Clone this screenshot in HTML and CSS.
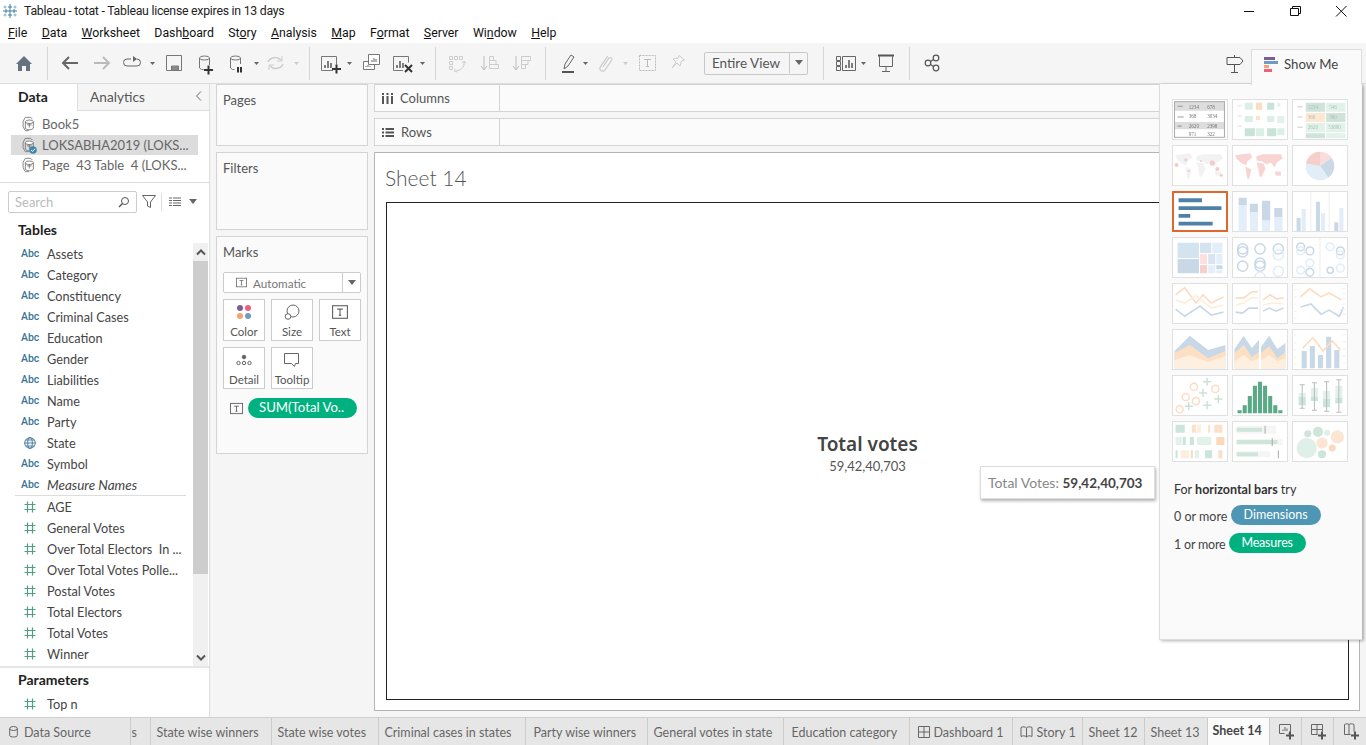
FILE: index.html
```html
<!DOCTYPE html>
<html lang="en">
<head>
    <meta charset="UTF-8">
    <meta name="viewport" content="width=device-width, initial-scale=1.0">
    <title>Tableau - totat</title>
    <link rel="stylesheet" href="styles.css">
</head>
<body>
    <svg class="defs" width="0" height="0">
        <symbol id="num" viewBox="0 0 12 12"><path d="M3.5 .5v11M8.5 .5v11M.5 3.5h11M.5 8.5h11" fill="none" stroke="#4f9f80" stroke-width="1.2"/></symbol>
        <symbol id="ds" viewBox="0 0 18 18"><path d="M6 1.500h6l2 2M3.500 6L6 1.500M3.500 6v6l2.500 4.500h4" fill="none" stroke="#777"/><ellipse cx="10.500" cy="6.500" rx="4.500" ry="2" fill="#fff" stroke="#777"/><path d="M6 6.500v7c0 1 2 2 4.500 2s4.500-1 4.500-2v-7M8 10h5M10.500 8v5" fill="none" stroke="#777"/></symbol>
        <symbol id="t" viewBox="0 0 14 14"><rect x=".5" y="1.500" width="13" height="11" fill="none" stroke="#666"/><path d="M4.500 4.500h5M7 4.500v5.500M6 10h2" fill="none" stroke="#666"/></symbol>
        <symbol id="world" viewBox="0 0 53 38"><path d="M2 9l15-2 2 4-5 4-1 4-4-2-5-4zM12 20l6 3-2 9h-2zM23 10l6-2h18l2 4-6 4-2 5-4-5-4 2-4-3-6-1zM23 16l7 1 2 5-4 8h-2l-1-7zM41 25h6v4h-5z"/></symbol>
    </svg>

    <div class="titlebar">
        <svg class="appicon" width="14" height="14" viewBox="0 0 14 14"><path d="M7 0v14M0 7h14M5 3h4M5 11h4M3 5v4M11 5v4" stroke="#3f7fa0" fill="none"/><path d="M2 1.500v3M.5 3h3M12 1.500v3M10.500 3h3M2 9.500v3M.5 11h3M12 9.500v3M10.500 11h3" stroke="#7fb0c8" fill="none"/></svg>
        <span>Tableau - totat - Tableau license expires in 13 days</span>
        <div class="winbtns">
            <svg width="46" height="20"><path d="M18 10.500h10" stroke="#111"/></svg>
            <svg width="46" height="20"><path d="M20.500 7.500v-2h8v7h-2M18.500 7.500h8v7h-8z" stroke="#111" fill="none"/></svg>
            <svg width="46" height="20"><path d="M18 5l10.500 10.500M28.500 5L18 15.500" stroke="#111" fill="none"/></svg>
        </div>
    </div>

    <nav class="menubar">
        <span><u>F</u>ile</span><span><u>D</u>ata</span><span><u>W</u>orksheet</span><span>Dash<u>b</u>oard</span><span>St<u>o</u>ry</span><span><u>A</u>nalysis</span><span><u>M</u>ap</span><span>F<u>o</u>rmat</span><span><u>S</u>erver</span><span>Wi<u>n</u>dow</span><span><u>H</u>elp</span>
    </nav>

    <div class="toolbar">
        <svg width="39" height="24" viewBox="8 52 39 24"><path d="M16 65l8-8 8 8h-2v7h-4v-5h-4v5h-4v-7z" fill="#66727f"/></svg>
        <i class="sep"></i>
        <svg width="261" height="24" viewBox="48 52 261 24" fill="none">
            <path d="M78 64H63M69 58l-6 6 6 6" stroke="#666" stroke-width="2"/>
            <path d="M94 64h15M103 58l6 6-6 6" stroke="#bbb" stroke-width="2"/>
            <path d="M131 60h-4a3.500 3.500 0 0 0 0 7h10a3.500 3.500 0 0 0 0-7" stroke="#666"/><path d="M133 57l4 3-4 3z" fill="#666"/>
            <path d="M150 63h5l-2.500 3z" fill="#666"/>
            <path d="M166.500 56.500h15v15h-15zM171.500 71v-4h7v4" stroke="#777"/><path d="M172 67h6v4h-6z" fill="#888"/>
            <ellipse cx="204.500" cy="59" rx="5" ry="2" stroke="#777"/><path d="M199.500 59v10l2 1.500h2M209.500 59v7" stroke="#777"/><path d="M204 71h9M208.500 66.500v9" stroke="#333" stroke-width="2"/>
            <ellipse cx="235.500" cy="59" rx="5" ry="2" stroke="#777"/><path d="M230.500 59v10l2 1.500h2M240.500 59v6" stroke="#777"/><path d="M238 68v5.500M241 68v5.500" stroke="#333" stroke-width="2"/>
            <path d="M254 63h5l-2.500 3z" fill="#666"/>
            <path d="M268 63a7.500 6.500 0 0 1 13-2M283 65a7.500 6.500 0 0 1-13 2" stroke="#ccc" stroke-width="1.500"/><path d="M282 57v5h-5M269 71v-5h5" stroke="#ccc"/>
            <path d="M294 63h5l-2.500 3z" fill="#ccc"/>
        </svg>
        <i class="sep"></i>
        <svg width="125" height="24" viewBox="310 52 125 24" fill="none">
            <path d="M333 71.500h-11.500v-14h15v8" stroke="#777"/><path d="M325 69v-3M328 69v-7M331 69v-5" stroke="#555" stroke-width="1.500"/><path d="M332 70h9M336.500 65.500v9" stroke="#333" stroke-width="2"/>
            <path d="M347 63h5l-2.500 3z" fill="#666"/>
            <path d="M363.500 62.500h11v8h-11z" fill="#fff" stroke="#777"/><path d="M368.500 55.500h11v10h-11z" fill="#fff" stroke="#777"/><path d="M372 63v-2M374 63v-4M376 63v-3M366 68v-1M368 68v-2M370 68v-1" stroke="#666"/>
            <path d="M403 71.500h-9.500v-14h15v6" stroke="#777"/><path d="M397 69v-3M400 69v-7M403 69v-5" stroke="#555" stroke-width="1.500"/><path d="M405 66l7 7M412 66l-7 7" stroke="#333" stroke-width="2"/>
            <path d="M420 63h5l-2.500 3z" fill="#666"/>
        </svg>
        <i class="sep"></i>
        <svg width="109" height="24" viewBox="436 52 109 24" fill="none" stroke="#ccc">
            <path d="M449.500 57.500h3v3h-3zM454.500 57.500h3v3h-3zM459.500 57.500h3v3h-3zM449.500 62.500h3v3h-3zM449.500 67.500h3v3h-3zM464 62c1 5-2 9-8 10M456 70l-2 2 3 1M462 64l2-2 2 2"/>
            <path d="M484 57v13M481 67l3 4 3-4" stroke="#bbb"/><path d="M489.500 57.500h4v4h-4zM489.500 61.500h6.500v4h-6.500zM489.500 65.500h9v4h-9z"/>
            <path d="M516 57v13M513 67l3 4 3-4" stroke="#bbb"/><path d="M521.500 57.500h9v4h-9zM521.500 61.500h6.500v4h-6.500zM521.500 65.500h4v4h-4z"/>
        </svg>
        <i class="sep"></i>
        <svg width="158" height="24" viewBox="546 52 158 24" fill="none">
            <path d="M564 70l1-5 6-9 3 2-6 9z" stroke="#666"/><path d="M562 73h12" stroke="#555" stroke-width="2"/>
            <path d="M583 63h5l-2.500 3z" fill="#666"/>
            <path d="M603 68l6-9a1.800 1.800 0 0 1 2.800 2l-7.300 10.500a2.800 2.800 0 0 1-4.300-3.400l7.500-11" stroke="#ccc" stroke-width="1.200"/>
            <path d="M623 63h5l-2.500 3z" fill="#ccc"/>
            <path d="M639.500 56.500h16v15h-16z" stroke="#bbb" stroke-dasharray="2 1"/><path d="M644 60.500h7M647.500 60.500v7M646 67.500h3" stroke="#bbb"/>
            <path d="M679 56.500l5.500 4.500-3 1-1.500 5-3-3-5 5 4-6-3-3 5-1z" stroke="#ccc"/>
        </svg>
        <div class="fit">
            <span>Entire View</span>
            <b><i class="caret"></i></b>
        </div>
        <i class="sep sep-fit"></i>
        <svg width="85" height="24" viewBox="824 52 85 24" fill="none">
            <path d="M836.500 57.500h4v4h-4zM836.500 62.500h4v4h-4zM836.500 67.500h4v4h-4zM842.500 57.500h13v14h-13z" stroke="#666"/><path d="M846 69v-3M849 69v-8M852 69v-5" stroke="#555" stroke-width="1.500"/>
            <path d="M861 63h5l-2.500 3z" fill="#666"/>
            <path d="M878 56.500h16" stroke="#555" stroke-width="2"/><path d="M879.500 57v10.500h13V57M886 67.500v4.500M882 72.500h8" stroke="#666"/>
        </svg>
        <i class="sep"></i>
        <svg class="share" width="30" height="24" viewBox="910 52 30 24" fill="none" stroke="#555" stroke-width="1.200"><circle cx="928" cy="64" r="2.800"/><circle cx="936" cy="59" r="2.800"/><circle cx="936" cy="69" r="2.800"/><path d="M930.500 62.500l3-2M930.500 65.500l3 2"/></svg>
        <svg class="sign" width="18" height="19" viewBox="0 0 18 19" fill="none" stroke="#555"><path d="M1 3.500h13l3 3.500-3 3.500H1zM8.500 1v2.500M8.500 10.500V18M5 18.500h7"/></svg>
    </div>

    <main class="main">
        <aside class="datapane">
            <div class="panetabs">
                <div class="tab-data">Data</div>
                <div class="tab-analytics">Analytics<svg width="8" height="12" fill="none" stroke="#666"><path d="M6 1.500L1.500 6 6 10.500"/></svg></div>
            </div>
            <ul class="sources">
                <li><svg width="16" height="16"><use href="#ds"/></svg>Book5</li>
                <li class="on"><svg width="16" height="16"><use href="#ds"/></svg><svg class="check" width="8" height="8"><circle cx="4" cy="4" r="3.800" fill="#3f87ad"/><path d="M2 4l1.500 1.500L6 2.800" fill="none" stroke="#fff"/></svg>LOKSABHA2019 (LOKS...</li>
                <li><svg width="16" height="16"><use href="#ds"/></svg>Page &nbsp;43 Table &nbsp;4 (LOKS...</li>
            </ul>
            <div class="searchrow">
                <div class="search">Search<svg width="12" height="12" fill="none" stroke="#555"><circle cx="7" cy="5" r="3.500"/><path d="M4.500 7.500L1 11" stroke-width="1.400"/></svg></div>
                <svg class="funnel" width="14" height="15" fill="none" stroke="#666"><path d="M.5 1.500h13L8.500 8v5.500l-3-1.500V8z"/></svg>
                <i class="vline"></i>
                <svg class="listicon" width="12" height="10" stroke="#666"><path d="M0 1h3M4 1h8M0 3.500h3M4 3.500h8M0 6h3M4 6h8M0 8.500h3M4 8.500h8"/></svg>
                <i class="caret"></i>
            </div>
            <h3 class="head">Tables</h3>
            <div class="fields">
                <ul class="fieldlist">
                    <li><span class="abc">Abc</span>Assets</li>
                    <li><span class="abc">Abc</span>Category</li>
                    <li><span class="abc">Abc</span>Constituency</li>
                    <li><span class="abc">Abc</span>Criminal Cases</li>
                    <li><span class="abc">Abc</span>Education</li>
                    <li><span class="abc">Abc</span>Gender</li>
                    <li><span class="abc">Abc</span>Liabilities</li>
                    <li><span class="abc">Abc</span>Name</li>
                    <li><span class="abc">Abc</span>Party</li>
                    <li><span class="abc"><svg width="12" height="12" fill="none" stroke="#4e7f9e"><circle cx="6" cy="6" r="5.300"/><ellipse cx="6" cy="6" rx="2.300" ry="5.300"/><path d="M.5 6h11M1.500 3h9M1.500 9h9"/></svg></span>State</li>
                    <li><span class="abc">Abc</span>Symbol</li>
                    <li class="last"><span class="abc">Abc</span><em>Measure Names</em></li>
                    <li><span class="abc"><svg width="12" height="12"><use href="#num"/></svg></span>AGE</li>
                    <li><span class="abc"><svg width="12" height="12"><use href="#num"/></svg></span>General Votes</li>
                    <li><span class="abc"><svg width="12" height="12"><use href="#num"/></svg></span>Over Total Electors &nbsp;In ...</li>
                    <li><span class="abc"><svg width="12" height="12"><use href="#num"/></svg></span>Over Total Votes Polle...</li>
                    <li><span class="abc"><svg width="12" height="12"><use href="#num"/></svg></span>Postal Votes</li>
                    <li><span class="abc"><svg width="12" height="12"><use href="#num"/></svg></span>Total Electors</li>
                    <li><span class="abc"><svg width="12" height="12"><use href="#num"/></svg></span>Total Votes</li>
                    <li><span class="abc"><svg width="12" height="12"><use href="#num"/></svg></span>Winner</li>
                </ul>
                <div class="scrollbar">
                    <b><svg width="10" height="7" fill="none" stroke="#555" stroke-width="2"><path d="M1 5.500l4-4 4 4"/></svg></b>
                    <div class="thumbbar"></div>
                    <div class="track"></div>
                    <b><svg width="10" height="7" fill="none" stroke="#555" stroke-width="2"><path d="M1 1.500l4 4 4-4"/></svg></b>
                </div>
            </div>
            <h3 class="head head-params">Parameters</h3>
            <ul class="fieldlist">
                <li><span class="abc"><svg width="12" height="12"><use href="#num"/></svg></span>Top n</li>
            </ul>
        </aside>

        <section class="cards">
            <div class="card card-pages">Pages</div>
            <div class="card card-filters">Filters</div>
            <div class="card card-marks">
                Marks
                <div class="marktype">
                    <svg width="11" height="11"><use href="#t"/></svg>
                    <span>Automatic</span>
                    <b><i class="caret"></i></b>
                </div>
                <div class="markgrid">
                    <div class="mark">
                        <svg width="16" height="16"><circle cx="4" cy="4" r="3" fill="#7b5f93"/><circle cx="12" cy="4" r="3" fill="#ef5f78"/><circle cx="4" cy="12" r="3" fill="#f2a36e"/><circle cx="12" cy="12" r="3" fill="#6f9bc9"/></svg>
                        Color
                    </div>
                    <div class="mark">
                        <svg width="16" height="16" fill="none" stroke="#666"><circle cx="9" cy="7" r="6"/><circle cx="4" cy="12.500" r="2.800" fill="#fff"/></svg>
                        Size
                    </div>
                    <div class="mark">
                        <svg width="16" height="16"><use href="#t"/></svg>
                        Text
                    </div>
                    <div class="mark">
                        <svg width="16" height="16" fill="none" stroke="#666"><circle cx="8" cy="5" r="1.800" fill="#666"/><circle cx="2.500" cy="11" r="1.700"/><circle cx="8" cy="11" r="1.700"/><circle cx="13.500" cy="11" r="1.700"/></svg>
                        Detail
                    </div>
                    <div class="mark">
                        <svg width="16" height="16" fill="none" stroke="#666"><path d="M.5 1.500h14v10h-3l-1 3-3-3h-7z"/></svg>
                        Tooltip
                    </div>
                </div>
                <div class="markpill">
                    <svg width="13" height="13"><use href="#t"/></svg>
                    <span class="pill">SUM(Total Vo..</span>
                </div>
            </div>
        </section>

        <section class="work">
            <div class="shelf">
                <div class="shelfname"><svg width="11" height="11" fill="#555"><path d="M0 3h2v8H0zM4.500 3h2v8h-2zM9 3h2v8H9zM0 0h2v2H0zM4.500 0h2v2h-2zM9 0h2v2H9z"/></svg>Columns</div>
            </div>
            <div class="shelf">
                <div class="shelfname"><svg width="12" height="11" fill="#555"><path d="M0 1h2v2H0zM3.500 1H12v2H3.500zM0 4.500h2v2H0zM3.500 4.500H12v2H3.500zM0 8h2v2H0zM3.500 8H12v2H3.500z"/></svg>Rows</div>
            </div>
            <div class="sheet">
                <h2>Sheet 14</h2>
                <div class="view">
                    <div class="big">Total votes</div>
                    <div class="small">59,42,40,703</div>
                </div>
            </div>
        </section>
    </main>

    <footer class="tabs">
        <div class="sheettab tab-source"><svg width="9" height="12" fill="none" stroke="#666"><ellipse cx="4.500" cy="2.500" rx="3.800" ry="2"/><path d="M.7 2.500v7c0 2 7.600 2 7.600 0v-7"/></svg>Data Source</div>
        <div class="sheettab tab-cut">s</div>
        <div class="sheettab w121">State wise winners</div>
        <div class="sheettab w107">State wise votes</div>
        <div class="sheettab w147">Criminal cases in states</div>
        <div class="sheettab w122 pl8">Party wise winners</div>
        <div class="sheettab w136">General votes in state</div>
        <div class="sheettab w126 pl8">Education category</div>
        <div class="sheettab w103 pl8"><svg width="12" height="12" fill="none" stroke="#666"><path d="M.5.500h11v11H.5zM.5 6h11M6 .500v11"/></svg>Dashboard 1</div>
        <div class="sheettab w70 pl7"><svg width="13" height="12" fill="none" stroke="#666"><path d="M1 1.500c2-1 4-1 5.500.5 1.500-1.500 3.500-1.500 5.500-.5v9c-2-1-4-1-5.500.5-1.500-1.500-3.500-1.500-5.500-.5zM6.500 2v9"/></svg>Story 1</div>
        <div class="sheettab w62">Sheet 12</div>
        <div class="sheettab w63">Sheet 13</div>
        <div class="sheettab w62 active">Sheet 14</div>
        <div class="sheettab w32 addtab"><svg width="18" height="18" fill="none" stroke="#666"><path d="M1.500 1.500h11v9h-2M1.500 1.500v9h5M5 8V6.500M7 8V4M9 8V5.500"/><path d="M8 12.500h8M12 8.500v8" stroke="#555" stroke-width="2"/></svg></div>
        <div class="sheettab w32 addtab"><svg width="18" height="18" fill="none" stroke="#666"><path d="M1.500 1.500h11v7M1.500 1.500v10h6M7 1.500v10M1.500 6.500h11"/><path d="M8 12.500h8M12 8.500v8" stroke="#555" stroke-width="2"/></svg></div>
        <div class="sheettab w33 addtab"><svg width="18" height="18" fill="none" stroke="#666"><path d="M1.500 1.500c2-1 3-1 4.500 0 1.500-1 3-1 5 0v7M1.500 1.500v10h6M6 1.500v10"/><path d="M8 12.500h8M12 8.500v8" stroke="#555" stroke-width="2"/></svg></div>
    </footer>

    <div class="tooltip">Total Votes: <b>59,42,40,703</b></div>

    <aside class="showme">
        <div class="showme-tab">
            <svg width="15" height="15"><path d="M0 0h11v3H0z" fill="#7b5f93"/><path d="M0 4h14v3H0z" fill="#6f9bc9"/><path d="M0 8h5v3H0z" fill="#f2a36e"/><path d="M0 12h8v3H0z" fill="#ef5f78"/></svg>
            Show Me
        </div>
        <div class="thumbs">
            <!-- text table -->
            <div class="thumb"><svg viewBox="1.500 1.500 53 38">
                <path d="M3 3h49v9H3zM3 23h49v7H3z" fill="#ddd"/><rect x="3" y="3" width="49" height="35" fill="none" stroke="#aaa"/>
                <path d="M6 7.500h5M6 18h6M6 27h4" stroke="#999"/>
                <g font-size="5" fill="#777" font-family="'Liberation Serif', serif"><text x="17" y="10">1234</text><text x="35" y="10">678</text><text x="17" y="19.500">368</text><text x="35" y="19.500">3034</text><text x="17" y="28.500">2620</text><text x="35" y="28.500">2398</text><text x="17" y="36.500">971</text><text x="35" y="36.500">322</text></g>
            </svg></div>
            <!-- highlight squares -->
            <div class="thumb"><svg viewBox="1.500 1.500 53 38">
                <path d="M6 7h4M6 17h4M6 27h4" stroke="#eee" stroke-width="2"/>
                <path d="M13 4h8v7h-8zM13 17h8v6h-8zM24 29h8v8h-8zM35 17h7v6h-7zM45 29h7v7h-7z" fill="#dcefe6"/>
                <path d="M24 4h6v7h-6z" fill="#fbdcc0"/><path d="M24 17h4v4h-4z" fill="#fce3c8"/>
                <path d="M35 4h7v7h-7zM13 29h10v8H13zM35 29h9v8h-9z" fill="#c9e3d8"/><path d="M45 4h3v4h-3zM45 17h7v7h-7z" fill="#e3f1eb"/>
            </svg></div>
            <!-- heat table -->
            <div class="thumb"><svg viewBox="1.500 1.500 53 38">
                <path d="M6 8h5M6 18h5M6 28h5" stroke="#ddd" stroke-width="1.500"/>
                <path d="M14 4h19v9H14zM34 14h19v9H34zM14 34h19v5H14z" fill="#cfe3da"/><path d="M34 4h19v9H34zM14 24h19v9H14zM34 24h19v9H34zM34 34h19v5H34z" fill="#e3f1eb"/><path d="M14 14h19v9H14z" fill="#fde8d4"/>
                <g font-size="5" fill="#a9c4b8" font-family="'Liberation Serif', serif"><text x="16" y="10">1234</text><text x="37" y="10">546</text><text x="16" y="20">368</text><text x="37" y="20">380</text><text x="16" y="30">2620</text><text x="36" y="30">53890</text></g>
            </svg></div>
            <!-- symbol map -->
            <div class="thumb"><svg viewBox="1.500 1.500 53 38">
                <use href="#world" width="53" height="38" x="1.500" y="1.500" fill="#f2f2f2"/>
                <g fill="#f3cbc8"><circle cx="5" cy="20" r="2"/><circle cx="14" cy="15" r="1.500"/><circle cx="29" cy="16" r="1"/><circle cx="40" cy="18" r="2.500"/><circle cx="45" cy="24" r="2"/><circle cx="49" cy="30" r="1.500"/><circle cx="17" cy="26" r="1"/></g>
            </svg></div>
            <!-- filled map -->
            <div class="thumb"><svg viewBox="1.500 1.500 53 38"><use href="#world" width="53" height="38" x="1.500" y="1.500" fill="#f8d5d2"/></svg></div>
            <!-- pie -->
            <div class="thumb"><svg viewBox="1.500 1.500 53 38">
                <path d="M28 21V7a14 14 0 0 1 11.500 6z" fill="#fadcdc"/><path d="M28 21l11.500-8a14 14 0 0 1-3.500 19.500z" fill="#cbd9e7"/><path d="M28 21l8 11.500A14 14 0 0 1 14.200 18.600z" fill="#e2edf8"/><path d="M28 21L14.200 18.600A14 14 0 0 1 28 7z" fill="#f5cfcc"/>
            </svg></div>
            <!-- horizontal bars, the selected one -->
            <div class="thumb selected"><svg viewBox="1.500 1.500 53 38"><path d="M6 7h24v4H6zM6 15h44v4H6zM6 23h12v4H6zM6 31h35v4H6z" fill="#4f81a8"/></svg></div>
            <!-- stacked bars -->
            <div class="thumb"><svg viewBox="1.500 1.500 53 38">
                <path d="M7 14h8v26H7zM18 21h8v19h-8zM30 29h8v11h-8zM42 26h8v14h-8z" fill="#e3eef9"/><path d="M7 7h8v7H7zM18 13h8v8h-8zM30 10h8v19h-8zM42 17h8v9h-8z" fill="#c9d8e7"/>
            </svg></div>
            <!-- side by side bars -->
            <div class="thumb"><svg viewBox="1.500 1.500 53 38">
                <path d="M19 1v39M37 1v39" stroke="#eee"/>
                <path d="M5 27h4v13H5zM24 11h4v29h-4zM42 31h4v9h-4z" fill="#cbd9e7"/><path d="M10 18h4v22h-4zM29 22h4v18h-4zM47 17h4v23h-4z" fill="#e2edf8"/>
            </svg></div>
            <!-- treemap -->
            <div class="thumb"><svg viewBox="1.500 1.500 53 38">
                <path d="M6 6h21v15H6zM28 6h11v10H28z" fill="#d3e3f0"/><path d="M6 22h21v14H6zM44 28h6v4h-6z" fill="#c9d8e7"/><path d="M40 6h10v10H40zM44 17h6v10h-6zM36 28h7v8h-7zM44 33h6v3h-6z" fill="#e2effa"/><path d="M28 17h7v10h-7z" fill="#fde0dd"/><path d="M36 17h7v10h-7z" fill="#d8e5f1"/><path d="M28 28h7v8h-7z" fill="#f7cfcc"/>
            </svg></div>
            <!-- circle views -->
            <div class="thumb"><svg viewBox="1.500 1.500 53 38"><g fill="none" stroke="#c9d8e7" stroke-width="1.500"><circle cx="11" cy="12" r="5"/><circle cx="11" cy="15" r="5"/><circle cx="28" cy="12" r="5"/><circle cx="46" cy="12" r="5"/><circle cx="11" cy="29" r="5"/><circle cx="28" cy="26" r="5"/><circle cx="28" cy="29" r="5"/></g><g fill="none" stroke="#e2edf8" stroke-width="1.500"><circle cx="46" cy="18" r="5"/><circle cx="46" cy="34" r="5"/><circle cx="28" cy="40" r="5"/></g></svg></div>
            <!-- side by side circles -->
            <div class="thumb"><svg viewBox="1.500 1.500 53 38"><path d="M28 1v39" stroke="#eee"/><g fill="none" stroke="#c9d8e7" stroke-width="1.500"><circle cx="9" cy="10" r="3.800"/><circle cx="18" cy="14" r="3.800"/><circle cx="18" cy="35" r="3.800"/><circle cx="48" cy="14" r="3.800"/><circle cx="38" cy="33" r="3"/></g><g fill="none" stroke="#e2edf8" stroke-width="1.500"><circle cx="9" cy="14" r="3.800"/><circle cx="9" cy="33" r="3.800"/><circle cx="18" cy="26" r="3.800"/><circle cx="38" cy="10" r="3.800"/><circle cx="48" cy="18" r="3.800"/><circle cx="48" cy="31" r="3.800"/></g></svg></div>
            <!-- lines -->
            <div class="thumb"><svg viewBox="1.500 1.500 53 38" fill="none" stroke-width="1.600"><path d="M4 12l9-7 11 15 7-8 8 8 12-6" stroke="#fcdcc0"/><path d="M4 17l9 3 11-7 15 12 12-3" stroke="#fdeeda"/><path d="M4 26l9 7 15-10 11 9 12-3" stroke="#c9d8e7"/></svg></div>
            <div class="thumb"><svg viewBox="1.500 1.500 53 38" fill="none" stroke-width="1.600"><path d="M28 1v39" stroke="#eee" stroke-width="1"/><path d="M4 15h8l8-6h6M31 17l7-5 6 4 7-1" stroke="#fcdcc0"/><path d="M4 22l8-2 8-5 6 0M31 22l9-2 11 1" stroke="#fdeeda"/><path d="M4 29l7 1 6-5h9M31 28l6-3 7 3 7-3" stroke="#c9d8e7"/></svg></div>
            <div class="thumb"><svg viewBox="1.500 1.500 53 38" fill="none" stroke-width="1.600"><path d="M9 14l9-8 11 8 8-4 12 7" stroke="#fcdcc0"/><path d="M9 24l10-3 10 10 8-4 10 6 4-9" stroke="#c9d8e7"/><path d="M50 6h3M50 11h3M50 16h3M50 21h3M50 26h3M50 31h3M3 7h2M3 14h2M3 21h2M3 28h2M3 35h2" stroke="#eee" stroke-width="1"/></svg></div>
            <!-- areas -->
            <div class="thumb"><svg viewBox="1.500 1.500 53 38"><path d="M3 22L18 7l18 14 17-5v23H3z" fill="#c9d8e7"/><path d="M3 24l15-8 18 13 17-7v17H3z" fill="#fde0c4"/><path d="M3 31l15-5 18 7 17-6v12H3z" fill="#fef0e0"/></svg></div>
            <div class="thumb"><svg viewBox="1.500 1.500 53 38"><path d="M3 20l9-13 8 12 7-8v28H3zM29 18l8-11 8 13 8-6v25H29z" fill="#c9d8e7"/><path d="M3 24l9-8 8 12 7-5v16H3zM29 24l8-7 8 12 8-6v16H29z" fill="#fde0c4"/><path d="M3 32l9-6 8 6 7-3v10H3zM29 31l8-5 8 6 8-3v10H29z" fill="#fef0e0"/></svg></div>
            <div class="thumb"><svg viewBox="1.500 1.500 53 38"><path d="M10 22h5v17h-5zM18 17h5v22h-5zM26 26h5v13h-5zM34 8h5v31h-5zM42 21h5v18h-5z" fill="#c9d8e7"/><path d="M11 19l10-10 10 13 9-10 8 9" fill="none" stroke="#fcdcc0" stroke-width="1.600"/><path d="M3 7h2M3 14h2M3 21h2M3 28h2M3 35h2M50 6h3M50 13h3M50 20h3M50 27h3M50 34h3" stroke="#eee"/></svg></div>
            <!-- scatter -->
            <div class="thumb"><svg viewBox="1.500 1.500 53 38" fill="none" stroke-width="1.400"><g stroke="#fcdcc0"><circle cx="8" cy="34" r="3.500"/><circle cx="14" cy="22" r="3.500"/><circle cx="22" cy="12" r="3.500"/><circle cx="24" cy="26" r="3.500"/><circle cx="43" cy="14" r="3.500"/></g><path d="M31 7h8M35 3v8M27 18h8M31 14v8M42 24h8M46 20v8M31 30h8M35 26v8M13 31h8M17 27v8" stroke="#c9e3d8"/></svg></div>
            <!-- histogram -->
            <div class="thumb"><svg viewBox="1.500 1.500 53 38"><path d="M6 35h4v3H6zM11 30h4v8h-4zM16 21h4v17h-4zM21 11h4v27h-4zM26 7h4v31h-4zM31 11h4v27h-4zM36 21h4v17h-4zM41 30h4v8h-4zM46 35h4v3h-4z" fill="#5aa987"/></svg></div>
            <!-- box plots -->
            <div class="thumb"><svg viewBox="1.500 1.500 53 38">
                <path d="M7 18h7v4H7zM19 13h7v9h-7zM31 16h7v8h-7zM43 11h7v12h-7z" fill="#e2f1ea"/><path d="M7 22h7v8H7zM19 22h7v4h-7zM31 24h7v8h-7zM43 23h7v5h-7z" fill="#cbe5da"/>
                <path d="M10.500 10v23M8 10h5M8 33h5M22.500 8v27M20 8h5M20 35h5M34.500 7v29M32 7h5M32 36h5M46.500 5v32M44 5h5M44 37h5" stroke="#bbb" fill="none"/>
            </svg></div>
            <!-- gantt -->
            <div class="thumb"><svg viewBox="1.500 1.500 53 38">
                <path d="M4 4h9v8H4zM11 16h3v8h-3zM18 16h4v8h-4zM4 29h2v8H4zM33 29h7v8h-7z" fill="#cbe5da"/><path d="M4 16h6v8H4zM25 16h14v8H25zM23 29h4v8h-4z" fill="#e2f1ea"/>
                <path d="M20 4h4v8h-4zM36 4h2v8h-2zM46 29h4v8h-4zM42 4h8v8h-8z" fill="#fde0c8"/><path d="M25 4h4v8h-4zM9 29h8v8H9z" fill="#fdeede"/><path d="M44 16h8v8h-8zM19 29h2v8h-2z" fill="#fdd9bb"/>
            </svg></div>
            <!-- bullet graphs -->
            <div class="thumb"><svg viewBox="1.500 1.500 53 38">
                <path d="M5 5h39v8H5zM5 18h45v6H5zM5 30h33v6H5z" fill="#f5f5f5"/><path d="M5 7h25v4H5zM5 19h40v4H5zM5 31h21v4H5z" fill="#cfe5da"/>
                <path d="M33 5v8M40 17v8M46 29v8" stroke="#aaa"/>
            </svg></div>
            <!-- packed bubbles -->
            <div class="thumb"><svg viewBox="1.500 1.500 53 38">
                <g fill="#dff0e8"><circle cx="15" cy="27" r="10"/><circle cx="35" cy="12" r="3"/></g>
                <g fill="#cfe5da"><circle cx="26" cy="11" r="5"/><circle cx="16" cy="13" r="3.500"/><circle cx="30" cy="33" r="4"/></g>
                <g fill="#fde5d3"><circle cx="45" cy="16" r="6.500"/><circle cx="30" cy="22" r="5.500"/></g><circle cx="40" cy="27" r="3.500" fill="#fbd9bf"/>
            </svg></div>
        </div>
        <p class="hint">For <b>horizontal bars</b> try</p>
        <p class="need">0 or more <span class="pill pill-dim">Dimensions</span></p>
        <p class="need need-tight">1 or more <span class="pill">Measures</span></p>
    </aside>
</body>
</html>
```

FILE: styles.css
```css
* {
    box-sizing: border-box;
}

body {
    margin: 0;
    width: 1366px;
    height: 745px;
    overflow: hidden;
    position: relative;
    background-color: #fff;
    color: #444;
    font-family: 'Lato', sans-serif;
    font-size: 13px;
}

ul {
    list-style: none;
    margin: 0;
    padding: 0;
}

svg {
    flex: none;
    display: block;
}

.defs {
    position: absolute;
}

.caret {
    display: block;
    width: 0;
    height: 0;
    border-left: 4px solid transparent;
    border-right: 4px solid transparent;
    border-top: 5px solid #666;
}

/* window chrome */
.titlebar {
    height: 22px;
    display: flex;
    align-items: center;
    padding-left: 3px;
    font-family: 'Roboto', sans-serif;
    font-size: 12.3px;
    letter-spacing: -0.25px;
    color: #222;
}

.appicon {
    margin-right: 7px;
}

.winbtns {
    margin-left: auto;
    margin-right: 2px;
    display: flex;
}

.menubar {
    height: 21px;
    display: flex;
    align-items: center;
    gap: 14.4px;
    padding: 1px 0 0 8px;
    font-family: 'Roboto', sans-serif;
    font-size: 12.3px;
    color: #111;
}

.toolbar {
    height: 41px;
    display: flex;
    align-items: center;
    padding: 0 122px 0 8px;
    background-color: #f5f5f5;
    border-bottom: 1px solid #ddd;
}

.sep {
    display: block;
    width: 1px;
    height: 33px;
    background-color: #d6d6d6;
}

.fit {
    width: 104px;
    height: 23px;
    display: flex;
    align-items: center;
    border: 1px solid #c8c8c8;
    border-radius: 2px;
    padding: 0 0 1px 7px;
    font-size: 13.5px;
    color: #555;
}

.fit span {
    flex: 1;
}

.fit b {
    width: 18px;
    height: 100%;
    display: flex;
    align-items: center;
    justify-content: center;
    border-left: 1px solid #c8c8c8;
}

.sep-fit {
    margin-left: 15px;
}

.sign {
    margin-left: auto;
}

/* layout */
.main {
    height: 633px;
    display: flex;
    background-color: #f5f5f5;
}

/* data pane */
.datapane {
    width: 210px;
    background-color: #fff;
    border-right: 1px solid #ddd;
    flex: none;
}

.panetabs {
    height: 27px;
    display: flex;
    font-size: 14px;
}

.tab-data {
    width: 77px;
    padding-left: 18px;
    line-height: 26px;
    font-weight: 700;
    color: #222;
}

.tab-analytics {
    flex: 1;
    display: flex;
    align-items: center;
    justify-content: space-between;
    padding: 0 6px 2px 12px;
    background-color: #f5f5f5;
    border-left: 1px solid #ddd;
    border-bottom: 1px solid #ddd;
    font-size: 13.7px;
    color: #555;
}

.sources {
    padding-top: 3px;
    height: 72px;
    border-bottom: 1px solid #ddd;
    color: #666;
}

.sources li {
    position: relative;
    height: 20.500px;
    margin: 0 11px;
    width: 187px;
    display: flex;
    align-items: center;
    gap: 6px;
    padding-left: 9px;
    white-space: nowrap;
}

.sources .on {
    background-color: #dcdcdc;
}

.check {
    position: absolute;
    left: 18px;
    top: 11px;
}

.searchrow {
    display: flex;
    align-items: center;
    margin: 7px 0 0 8px;
    height: 23px;
}

.search {
    width: 129px;
    height: 22px;
    display: flex;
    align-items: center;
    justify-content: space-between;
    padding: 0 6px;
    border: 1px solid #ccc;
    border-radius: 2px;
    color: #bbb;
}

.funnel {
    margin-left: 5px;
}

.vline {
    display: block;
    width: 1px;
    height: 18px;
    margin: 0 7px 0 5px;
    background-color: #ddd;
}

.searchrow .caret {
    margin-left: 8px;
}

.head {
    margin: 6px 0 0 18px;
    height: 22px;
    line-height: 22px;
    font-size: 14px;
    font-weight: 700;
    color: #222;
}

.head-params {
    margin-top: 1px;
    margin-bottom: 2px;
}

.fields {
    height: 425px;
    display: flex;
    overflow: hidden;
    border-bottom: 2px solid #e6e6e6;
    margin-top: 2px;
}

.fieldlist {
    flex: 1;
    font-size: 12.7px;
    color: #444;
}

.fieldlist li {
    height: 21px;
    display: flex;
    align-items: center;
    white-space: nowrap;
    padding-left: 21px;
}

.fieldlist .last {
    height: 22px;
    border-bottom: 1px solid #ddd;
    margin: 0 7px 0 15px;
    padding-left: 6px;
}

.fieldlist em {
    font-size: 13.500px;
}

.abc {
    width: 26px;
    flex: none;
    font-family: 'Roboto', sans-serif;
    font-size: 10.5px;
    font-weight: 500;
    color: #3b7595;
}

.abc svg {
    margin-left: 3px;
}

.scrollbar {
    width: 15px;
    margin-right: 1px;
    flex: none;
    display: flex;
    flex-direction: column;
    background-color: #f0f0f0;
}

.scrollbar b {
    height: 18px;
    display: flex;
    align-items: center;
    justify-content: center;
}

.thumbbar {
    height: 313px;
    background-color: #cdcdcd;
}

.track {
    flex: 1;
}

/* pages, filters, marks */
.cards {
    width: 152px;
    margin-left: 6px;
    flex: none;
    display: flex;
    flex-direction: column;
    gap: 6px;
}

.card {
    padding: 7px 6px;
    background-color: #fafafa;
    border: 1px solid #d4d4d4;
    color: #555;
}

.card-pages {
    height: 62px;
}

.card-filters {
    height: 78px;
}

.card-marks {
    height: 218px;
}

.marktype {
    height: 21px;
    margin-top: 12px;
    display: flex;
    align-items: center;
    padding-left: 12px;
    background-color: #fff;
    border: 1px solid #ccc;
    border-radius: 2px;
    font-size: 11.7px;
    color: #777;
}

.marktype span {
    flex: 1;
    margin-left: 6px;
}

.marktype b {
    width: 18px;
    height: 100%;
    display: flex;
    align-items: center;
    justify-content: center;
    border-left: 1px solid #ccc;
}

.markgrid {
    margin-top: 6px;
    display: grid;
    grid-template-columns: repeat(3, 42px);
    gap: 6px;
}

.mark {
    height: 42px;
    display: flex;
    flex-direction: column;
    align-items: center;
    justify-content: flex-end;
    gap: 5px;
    padding-bottom: 2px;
    background-color: #fff;
    border: 1px solid #ccc;
    font-size: 11.5px;
    color: #555;
}

.markpill {
    margin-top: 9px;
    display: flex;
    align-items: center;
    padding-left: 7px;
    gap: 5px;
}

.pill {
    display: inline-block;
    height: 20px;
    line-height: 19px;
    padding: 0 13px;
    border-radius: 10px;
    background-color: #00b180;
    color: #fff;
    white-space: nowrap;
}

.markpill .pill {
    width: 109px;
    padding: 0 11px;
    font-size: 13.200px;
}

/* workspace */
.work {
    flex: 1;
    margin: 0 6px 6px 6px;
    display: flex;
    flex-direction: column;
    gap: 6px;
}

.shelf {
    height: 28px;
    background-color: #fbfbfb;
    border: 1px solid #d4d4d4;
}

.shelfname {
    width: 125px;
    height: 100%;
    display: flex;
    align-items: center;
    gap: 7px;
    padding-left: 7px;
    border-right: 1px solid #d4d4d4;
    color: #555;
}

.sheet {
    flex: 1;
    padding: 10px 10px 10px 11px;
    display: flex;
    flex-direction: column;
    background-color: #fff;
    border: 1px solid #b5b5b5;
}

.sheet h2 {
    margin: 0 0 0 -1px;
    height: 39px;
    font-size: 21px;
    line-height: 30px;
    font-weight: 300;
    color: #555;
}

.view {
    flex: 1;
    display: flex;
    flex-direction: column;
    align-items: center;
    justify-content: center;
    padding-top: 5px;
    border: 1px solid #222;
}

.big {
    font-family: 'Noto Sans', sans-serif;
    font-size: 19px;
    font-weight: 600;
    color: #444;
    line-height: 24px;
}

.small {
    font-size: 13px;
    color: #555;
    line-height: 20px;
}

/* tabs along the bottom */
.tabs {
    height: 28px;
    display: flex;
    background-color: #e6e6e6;
    border-top: 1px solid #d0d0d0;
}

.sheettab {
    flex: none;
    display: flex;
    align-items: center;
    gap: 4px;
    padding: 1px 0 0 6px;
    border-right: 1px solid #ccc;
    font-size: 12.500px;
    color: #666;
    white-space: nowrap;
}

.tab-source {
    width: 130.500px;
    gap: 6px;
    padding-left: 9px;
}

.tab-cut {
    width: 20px;
    padding-left: 1px;
}

.pl8 { padding-left: 8px; }
.pl7 { padding-left: 7px; }
.w121 { width: 121px; }
.w107 { width: 107px; }
.w147 { width: 147px; }
.w122 { width: 122px; }
.w136 { width: 136px; }
.w126 { width: 126px; }
.w103 { width: 103px; }
.w70 { width: 70px; }
.w62 { width: 62px; }
.w63 { width: 63px; }
.w32 { width: 32px; }
.w33 { width: 33px; }

.sheettab.active {
    padding: 0 0 2px 5px;
    background-color: #fbfbfb;
    color: #444;
    font-weight: 700;
}

.addtab {
    justify-content: center;
    padding-left: 4px;
}

/* things lying over the sheet */
.tooltip {
    position: absolute;
    left: 980px;
    top: 466px;
    width: 175px;
    height: 33px;
    line-height: 31px;
    padding-left: 7px;
    background-color: #fff;
    border: 1px solid #ddd;
    box-shadow: 1px 2px 3px rgba(0, 0, 0, 0.3);
    font-size: 14px;
    color: #888;
}

.tooltip b {
    font-size: 13.500px;
    font-weight: 700;
    color: #444;
}

.showme {
    position: absolute;
    left: 1159px;
    top: 84px;
    width: 203px;
    height: 556px;
    padding: 15px 0 0 12px;
    background-color: #fafafa;
    border-left: 1px solid #ddd;
    border-bottom: 1px solid #ddd;
    box-shadow: 2px 1px 3px rgba(0, 0, 0, 0.3);
}

.showme-tab {
    position: absolute;
    right: 0;
    top: -35px;
    width: 111px;
    height: 36px;
    display: flex;
    align-items: center;
    gap: 5px;
    padding: 0 0 7px 12px;
    background-color: #fafafa;
    border: 1px solid #ddd;
    border-bottom: none;
    font-size: 13.200px;
    color: #444;
}

.thumbs {
    display: grid;
    grid-template-columns: repeat(3, 56px);
    grid-auto-rows: 41px;
    gap: 5px 4px;
}

.thumb {
    background-color: #fff;
    border: 1.500px solid #e0e0e0;
}

.thumb svg {
    width: 100%;
    height: 100%;
    filter: blur(0.3px);
}

.thumb.selected {
    border: 2px solid #e0682f;
}

.hint {
    margin: 20px 0 0 2px;
    font-size: 12.500px;
    color: #333;
}

.need {
    margin: 8px 0 0 2px;
    font-size: 12.500px;
    color: #444;
}

.need .pill {
    vertical-align: 2px;
}

.need-tight {
    margin-top: 8px;
    letter-spacing: -0.2px;
}

.pill-dim {
    background-color: #4e96b4;
}
```
